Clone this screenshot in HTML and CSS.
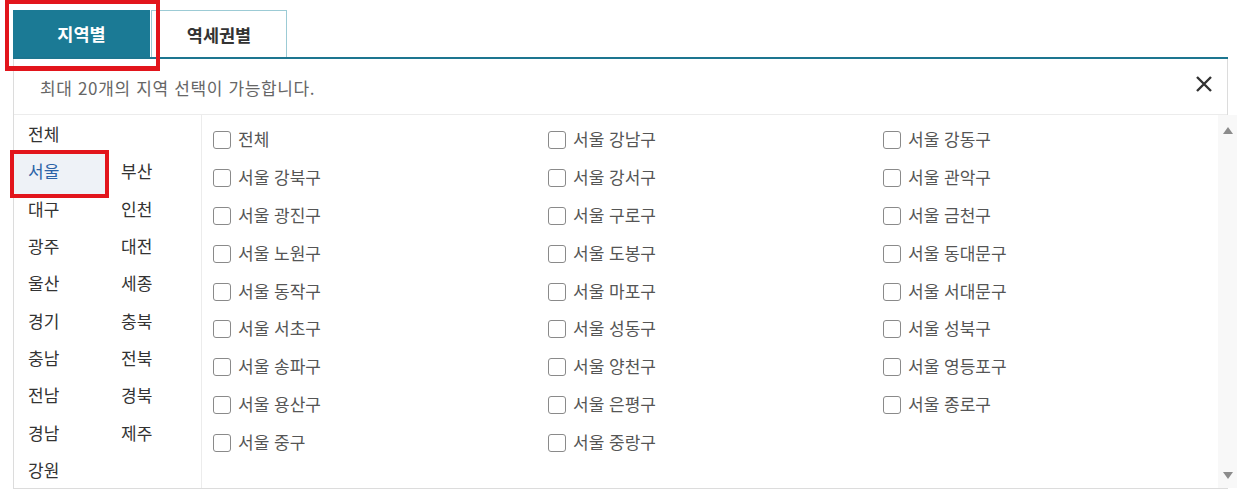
FILE: index.html
```html
<!DOCTYPE html>
<html lang="ko">
<head>
<meta charset="utf-8">
<title>지역 선택</title>
<link rel="stylesheet" href="styles.css">
</head>
<body>
<div class="page">
  <div class="tabs">
    <div class="tab active">지역별</div>
    <div class="tab">역세권별</div>
  </div>
  <div class="hl"></div>
  <div class="panel">
    <div class="panel-head">
      <span class="notice">최대 20개의 지역 선택이 가능합니다.</span>
      <button class="close" type="button" aria-label="닫기">
        <svg width="18" height="18" viewBox="0 0 18 18"><path d="M2 2 L16 16 M16 2 L2 16" stroke="#333" stroke-width="2.4" stroke-linecap="butt" fill="none"/></svg>
      </button>
    </div>
    <div class="panel-body">
      <ul class="regions">
        <li class="all">전체</li>
        <li class="selected">서울</li><li>부산</li>
        <li>대구</li><li>인천</li>
        <li>광주</li><li>대전</li>
        <li>울산</li><li>세종</li>
        <li>경기</li><li>충북</li>
        <li>충남</li><li>전북</li>
        <li>전남</li><li>경북</li>
        <li>경남</li><li>제주</li>
        <li>강원</li>
      </ul>
      <div class="districts">
        <label class="dist"><span class="cb"></span>전체</label>
        <label class="dist"><span class="cb"></span>서울 강남구</label>
        <label class="dist"><span class="cb"></span>서울 강동구</label>
        <label class="dist"><span class="cb"></span>서울 강북구</label>
        <label class="dist"><span class="cb"></span>서울 강서구</label>
        <label class="dist"><span class="cb"></span>서울 관악구</label>
        <label class="dist"><span class="cb"></span>서울 광진구</label>
        <label class="dist"><span class="cb"></span>서울 구로구</label>
        <label class="dist"><span class="cb"></span>서울 금천구</label>
        <label class="dist"><span class="cb"></span>서울 노원구</label>
        <label class="dist"><span class="cb"></span>서울 도봉구</label>
        <label class="dist"><span class="cb"></span>서울 동대문구</label>
        <label class="dist"><span class="cb"></span>서울 동작구</label>
        <label class="dist"><span class="cb"></span>서울 마포구</label>
        <label class="dist"><span class="cb"></span>서울 서대문구</label>
        <label class="dist"><span class="cb"></span>서울 서초구</label>
        <label class="dist"><span class="cb"></span>서울 성동구</label>
        <label class="dist"><span class="cb"></span>서울 성북구</label>
        <label class="dist"><span class="cb"></span>서울 송파구</label>
        <label class="dist"><span class="cb"></span>서울 양천구</label>
        <label class="dist"><span class="cb"></span>서울 영등포구</label>
        <label class="dist"><span class="cb"></span>서울 용산구</label>
        <label class="dist"><span class="cb"></span>서울 은평구</label>
        <label class="dist"><span class="cb"></span>서울 종로구</label>
        <label class="dist"><span class="cb"></span>서울 중구</label>
        <label class="dist"><span class="cb"></span>서울 중랑구</label>
      </div>
      <div class="scrollbar">
        <span class="arr up"></span>
        <span class="arr down"></span>
      </div>
    </div>
  </div>
</div>
</body>
</html>
```

FILE: styles.css
```css
* { box-sizing: border-box; }

html, body {
  margin: 0;
  background: #fff;
}

body {
  font-family: "Noto Sans CJK KR", "Noto Sans", sans-serif;
  color: #333;
}

.page {
  position: relative;
  width: 1215px;
  margin-left: 13px;
  padding-top: 10px;
}

.tabs {
  display: flex;
  height: 49px;
  border-bottom: 2px solid #1d7690;
}

.tab {
  width: 136px;
  margin-left: 1px;
  display: flex;
  align-items: center;
  justify-content: center;
  font-size: 17.5px;
  font-weight: 700;
  color: #333;
  background: #fff;
  border: 1px solid #9ccbd5;
  border-bottom: none;
}

.tab.active {
  width: 137px;
  margin-left: 0;
  background: #1b7a95;
  color: #fff;
  border: none;
}

.hl {
  position: absolute;
  left: -8px;
  top: 0;
  width: 155px;
  height: 71px;
  border: 4px solid #e2151c;
  border-bottom-width: 5px;
  pointer-events: none;
}

.panel {
  border: 1px solid #dcdcdc;
  border-top: none;
}

.panel-head {
  height: 56px;
  border-bottom: 1px solid #ececec;
  display: flex;
  align-items: center;
  justify-content: space-between;
  padding: 0 14px 0 26px;
}

.notice {
  font-size: 17px;
  color: #666;
  letter-spacing: 0.65px;
  margin-top: 2px;
}

.close {
  border: none;
  background: none;
  padding: 0;
  width: 18px;
  height: 18px;
  margin-top: -6px;
  display: block;
}

.close svg { display: block; }

.panel-body {
  display: flex;
  height: 373px;
}

.regions {
  list-style: none;
  margin: 0;
  padding: 0;
  width: 188px;
  flex: none;
  border-right: 1px solid #ececec;
  display: grid;
  grid-template-columns: 93px 93px;
  grid-auto-rows: 37.3px;
  align-content: start;
}

.regions li {
  display: flex;
  align-items: center;
  padding-left: 14px;
  font-size: 17px;
  color: #333;
  position: relative;
  z-index: 0;
}

.regions li.all {
  grid-column: 1 / span 2;
}

.regions li.selected {
  color: #2b62a6;
}

.regions li.selected::after {
  content: "";
  position: absolute;
  left: -4px;
  right: -2px;
  top: -2px;
  bottom: -8px;
  border: 4px solid #e2151c;
  background: #eef2f7;
  z-index: -1;
}

.districts {
  flex: 1;
  display: grid;
  grid-template-columns: repeat(3, 335px);
  grid-auto-rows: 37.8px;
  align-content: start;
  padding: 5px 0 0 11px;
}

.dist {
  display: flex;
  align-items: center;
  gap: 7px;
  font-size: 17px;
  color: #555;
}

.cb {
  width: 18px;
  height: 18px;
  border: 1.5px solid #8a8a8a;
  border-radius: 3px;
  background: #fff;
  margin-top: 3px;
  flex: none;
}

.scrollbar {
  width: 19px;
  flex: none;
  background: #f8f8f8;
  display: flex;
  flex-direction: column;
  justify-content: space-between;
  align-items: center;
  padding: 12px 0 9px;
}

.arr {
  width: 0;
  height: 0;
  border-left: 5.5px solid transparent;
  border-right: 5.5px solid transparent;
}

.arr.up { border-bottom: 7px solid #8c8c8c; }
.arr.down { border-top: 7px solid #8c8c8c; }
```
